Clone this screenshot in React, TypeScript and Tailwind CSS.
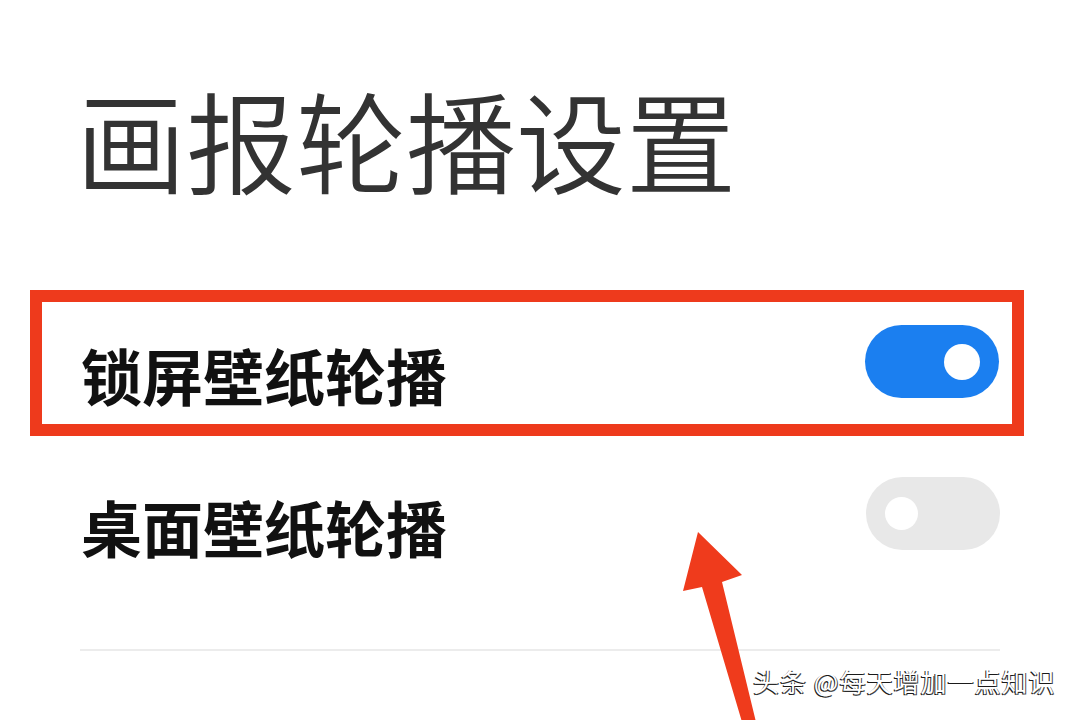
import React from "react";

function Toggle({ on }: { on: boolean }) {
  return on ? (
    <div className="flex h-[73px] w-[134px] shrink-0 items-center justify-end rounded-full bg-[#1b7ff0] pr-[19px]">
      <div className="h-[36px] w-[36px] rounded-full bg-white" />
    </div>
  ) : (
    <div className="flex h-[73px] w-[134px] shrink-0 items-center justify-start rounded-full bg-[#e8e8e8] pl-[19px]">
      <div className="h-[33px] w-[33px] rounded-full bg-white" />
    </div>
  );
}

export default function App() {
  return (
    <div
      className="relative h-[720px] w-[1080px] overflow-hidden bg-white"
      style={{ fontFamily: '"Noto Sans CJK SC", "Noto Sans", sans-serif' }}
    >
      <div className="flex flex-col pt-[83px]">
        <div className="pl-[76px] text-[110px] font-[350] leading-none text-[#333333]">
          画报轮播设置
        </div>

        <div className="ml-[30px] mt-[97px] flex h-[146px] w-[994px] items-start justify-between border-[12px] border-[#ee3a1c] pl-[39px] pr-[13px]">
          <div className="mt-[42px] text-[61px] font-bold leading-none text-[#111111]">
            锁屏壁纸轮播
          </div>
          <div className="mt-[23px]">
            <Toggle on={true} />
          </div>
        </div>

        <div className="mt-[41px] flex w-[1000px] items-start justify-between pl-[81px]">
          <div className="mt-[19px] text-[61px] font-bold leading-none text-[#111111]">
            桌面壁纸轮播
          </div>
          <Toggle on={false} />
        </div>

        <div className="ml-[80px] mt-[92px] h-[2px] w-[920px] bg-[#ececec]" />
      </div>

      <svg
        className="absolute left-0 top-0"
        width="1080"
        height="720"
        viewBox="0 0 1080 720"
      >
        <polygon
          points="698,532 742,575 722,582 756,722 742,722 702,587 683,591"
          fill="#ef3b1c"
        />
      </svg>

      <div className="absolute left-[753px] top-[668px] whitespace-nowrap text-[26px] leading-none tracking-[1px] text-white [text-shadow:-1px_1px_0_#1a1a1a,1px_1px_0_#444]">
        头条 @每天增加一点知识
      </div>
    </div>
  );
}
